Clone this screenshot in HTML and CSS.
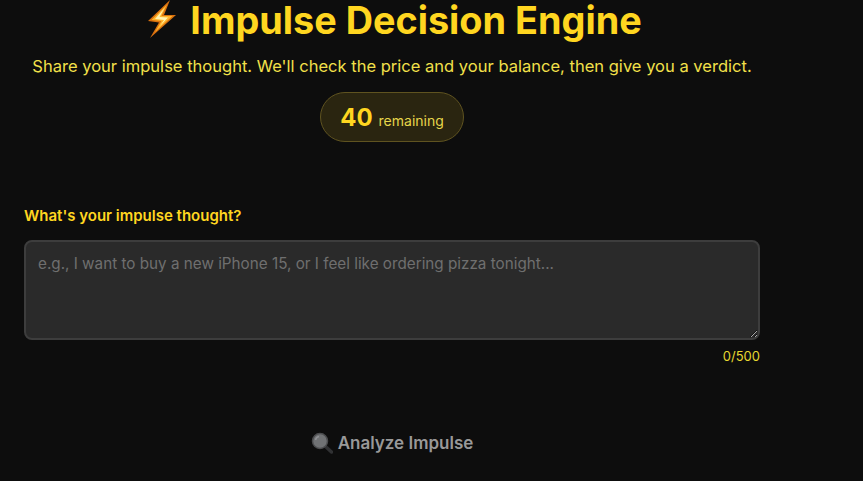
FILE: index.html
```html
<!DOCTYPE html>
<html lang="en">
<head>
  <meta charset="UTF-8" />
  <meta name="viewport" content="width=device-width, initial-scale=1.0" />
  <title>Impulse Decision Engine</title>
  <link rel="stylesheet" href="styles.css">
</head>
<body>

<div class="container">
  <div class="header">
    <h1>
      <svg class="bolt" viewBox="0 0 32 40" width="32" height="40" aria-hidden="true">
        <path d="M24 0 L2 21 L13 22.500 L4 38 L30 15 L18 15 Z" fill="#d9700f"/>
        <path d="M21 4.500 L5.500 20 L15.500 21 L9 32 L26.500 16 L15.500 16 Z" fill="#ffb52b"/>
        <path d="M18.500 8 L9 19 L18 20 L14 26 L22 17.500 L13.500 17 Z" fill="#fff3b0"/>
      </svg>
      <span>Impulse Decision Engine</span>
    </h1>
    <p class="subtitle">Share your impulse thought. We'll check the price and your balance, then give you a verdict.</p>
    <div class="credits">
      <span class="credits-count">40</span>
      <span class="credits-label">remaining</span>
    </div>
  </div>

  <form class="impulse-form">
    <label class="field-label" for="thought">What's your impulse thought?</label>
    <textarea id="thought" maxlength="500" placeholder="e.g., I want to buy a new iPhone 15, or I feel like ordering pizza tonight..."></textarea>
    <div class="char-count">0/500</div>
    <button class="analyze-button" type="button" disabled>
      <svg class="lens" viewBox="0 0 22 22" width="22" height="22" aria-hidden="true">
        <path d="M14 14 L20.500 20" stroke="#303133" stroke-width="3.500" stroke-linecap="round"/>
        <circle cx="9" cy="9" r="7.500" fill="#707274" stroke="#4b4c4e" stroke-width="1.500"/>
        <path d="M4.500 8 A4.500 4.500 0 0 1 8 4.500" stroke="#8f9194" stroke-width="1.500" fill="none"/>
      </svg>
      <span>Analyze Impulse</span>
    </button>
  </form>
</div>

</body>
</html>
```

FILE: styles.css
```css
* {
  box-sizing: border-box;
}

body {
  font-family: Inter, "Liberation Sans", sans-serif;
  background-color: #0d0d0d;
  color: #ffd620;
  margin: 0;
  padding: 0;
  height: 481px;
  overflow: hidden;
}

.container {
  width: 784px;
  padding: 0 24px;
}

.header {
  display: flex;
  flex-direction: column;
  align-items: center;
}

h1 {
  display: flex;
  align-items: flex-start;
  gap: 12px;
  margin: 0;
  padding-left: 4px;
  height: 41px;
  font-size: 37.8px;
  font-weight: 700;
  line-height: 40px;
  color: #ffd620;
  white-space: nowrap;
}

.subtitle {
  margin: 15px 0 0;
  font-size: 16.55px;
  line-height: 20px;
  color: #f2e04a;
  white-space: nowrap;
}

.credits {
  display: flex;
  align-items: center;
  gap: 6px;
  margin-top: 16px;
  height: 50px;
  padding: 0 19px;
  border: 1px solid #5f5320;
  border-radius: 25px;
  background: #2a2510;
}

.credits-count {
  font-size: 24px;
  font-weight: 700;
  color: #ffd620;
}

.credits-label {
  margin-top: 6px;
  font-size: 14px;
  color: #e6d64a;
}

.impulse-form {
  margin-top: 65px;
}

.field-label {
  display: block;
  font-size: 15px;
  font-weight: 600;
  line-height: 17px;
  color: #ffd620;
}

textarea {
  display: block;
  width: 100%;
  height: 100px;
  margin-top: 16px;
  padding: 11px 12px;
  background: #2a2a2a;
  border: 2px solid #3d3d3d;
  border-radius: 8px;
  color: #eee;
  font-family: inherit;
  font-size: 15.25px;
  line-height: 22px;
  outline: none;
  resize: vertical;
}

textarea::placeholder {
  color: #6f6f6f;
  opacity: 1;
}

.char-count {
  margin-top: 8px;
  font-size: 13px;
  line-height: 16px;
  text-align: right;
  color: #e6d830;
}

.analyze-button {
  display: flex;
  align-items: center;
  justify-content: center;
  gap: 5px;
  width: 100%;
  margin-top: 67px;
  padding: 0;
  background: none;
  border: none;
  color: #999;
  font-family: inherit;
  font-size: 17px;
  font-weight: 600;
  line-height: 24px;
}
```
